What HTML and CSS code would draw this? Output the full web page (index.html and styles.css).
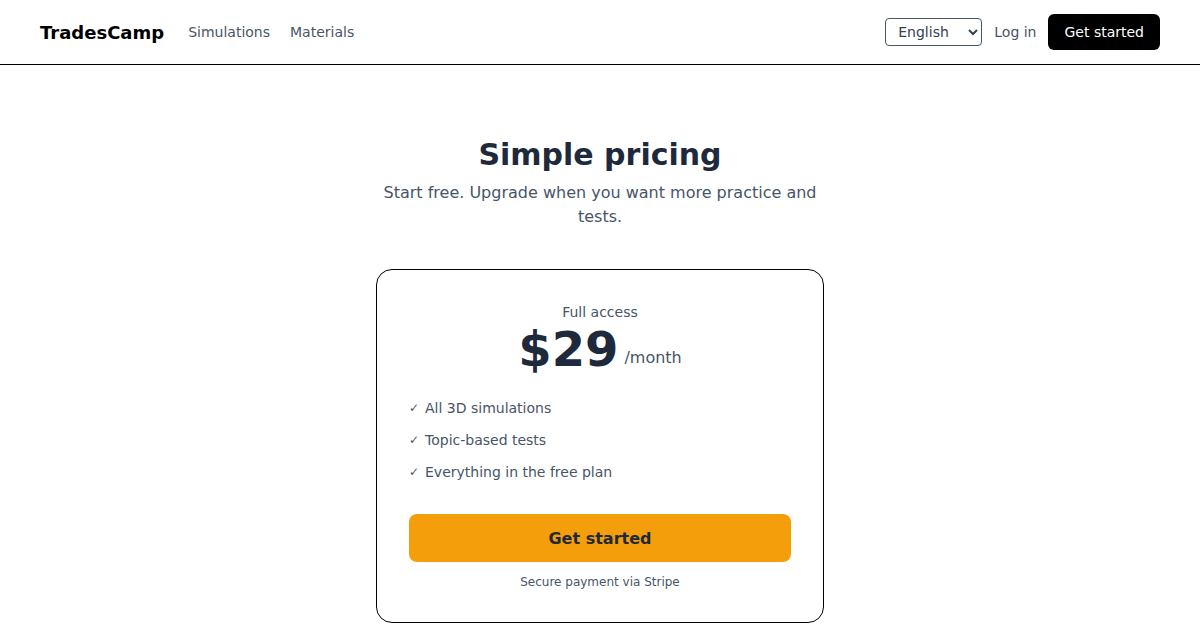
FILE: index.html
```html
<!DOCTYPE html>
<html lang="en">
<head>
<meta charset="utf-8">
<title>TradesCamp – Pricing</title>
<link rel="stylesheet" href="styles.css">
</head>
<body>
<header class="topbar">
  <div class="brand-group">
    <a class="brand" href="#">TradesCamp</a>
    <nav class="nav">
      <a href="#">Simulations</a>
      <a href="#">Materials</a>
    </nav>
  </div>
  <div class="actions">
    <select class="lang"><option>English</option><option>Español</option></select>
    <a class="login" href="#">Log in</a>
    <a class="cta-dark" href="#">Get started</a>
  </div>
</header>
<main class="pricing">
  <h1 class="title">Simple pricing</h1>
  <p class="subtitle">Start free. Upgrade when you want more practice and tests.</p>
  <section class="card">
    <div class="plan">Full access</div>
    <div class="price"><span class="amount">$29</span><span class="period">/month</span></div>
    <ul class="features">
      <li><span class="check">✓</span>All 3D simulations</li>
      <li><span class="check">✓</span>Topic-based tests</li>
      <li><span class="check">✓</span>Everything in the free plan</li>
    </ul>
    <a class="cta-orange" href="#">Get started</a>
    <div class="secure">Secure payment via Stripe</div>
  </section>
</main>
</body>
</html>
```
FILE: styles.css
```css
* { box-sizing: border-box; }
html, body { margin: 0; padding: 0; background: #fff; }
body { font-family: "DejaVu Sans", sans-serif; color: #1e293b; }
a { text-decoration: none; color: inherit; }

.topbar {
  height: 65px;
  border-bottom: 1px solid #000;
  display: flex;
  align-items: center;
  justify-content: space-between;
  padding: 0 40px;
}
.brand-group { display: flex; align-items: center; gap: 24px; }
.brand { font-size: 18px; font-weight: 700; color: #000; }
.nav { display: flex; gap: 20px; font-size: 14px; color: #475569; }
.actions { display: flex; align-items: center; gap: 12px; font-size: 14px; }
.lang {
  font-family: "DejaVu Sans", sans-serif;
  font-size: 14px;
  color: #334155;
  width: 97px;
  height: 28px;
  padding: 0 4px 0 8px;
  border: 1px solid #475569;
  border-radius: 4px;
  background: #fff;
}
.login { color: #475569; }
.cta-dark {
  background: #000;
  color: #fff;
  height: 36px;
  padding: 0 16px;
  border-radius: 6px;
  display: flex;
  align-items: center;
}

.pricing {
  display: flex;
  flex-direction: column;
  align-items: center;
  padding-top: 72px;
}
.title { margin: 0; font-size: 30px; line-height: 36px; font-weight: 700; color: #1e293b; }
.subtitle {
  margin: 8px 0 0;
  max-width: 448px;
  text-align: center;
  font-size: 16px;
  line-height: 24px;
  color: #475569;
}
.card {
  margin-top: 40px;
  width: 448px;
  border: 1px solid #000;
  border-radius: 16px;
  padding: 32px;
  display: flex;
  flex-direction: column;
}
.plan { text-align: center; font-size: 14px; line-height: 20px; color: #475569; }
.price {
  display: flex;
  justify-content: center;
  align-items: flex-end;
  gap: 6px;
  margin-top: 3px;
}
.amount { font-size: 48px; line-height: 48px; font-weight: 700; color: #1e293b; }
.period { font-size: 16px; line-height: 24px; margin-bottom: 3px; color: #475569; }
.features {
  list-style: none;
  margin: 25px 0 0;
  padding: 0;
  display: flex;
  flex-direction: column;
  gap: 12px;
  font-size: 14px;
  color: #475569;
}
.features li { display: flex; align-items: center; height: 20px; line-height: 20px; }
.check { font-size: 12px; line-height: 20px; margin-right: 5px; width: 11px; }
.cta-orange {
  margin-top: 32px;
  height: 48px;
  border-radius: 8px;
  background: #f59e0b;
  color: #1e293b;
  font-size: 16px;
  font-weight: 700;
  display: flex;
  align-items: center;
  justify-content: center;
}
.secure {
  margin-top: 12px;
  text-align: center;
  font-size: 12px;
  line-height: 16px;
  color: #475569;
}
```
